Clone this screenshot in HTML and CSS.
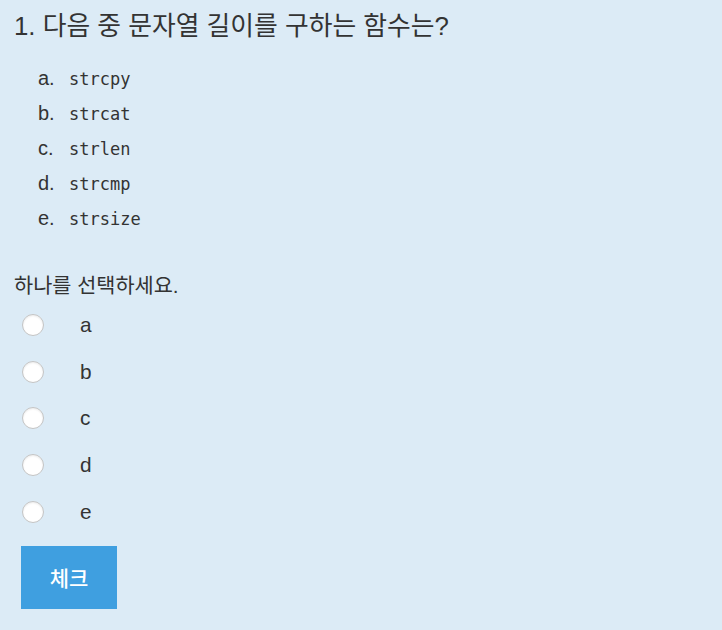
FILE: index.html
```html
<!DOCTYPE html>
<html lang="ko">

<head>
    <meta charset="UTF-8">
    <meta name="viewport" content="width=device-width, initial-scale=1.0">
    <title>문제 1</title>
    <link rel="stylesheet" href="styles.css">
</head>

<body>

    <div id="quiz">
        <h2 id="question">1. 다음 중 문자열 길이를 구하는 함수는?</h2>

        <ul class="choices">
            <li><span class="mark">a.</span><code>strcpy</code></li>
            <li><span class="mark">b.</span><code>strcat</code></li>
            <li><span class="mark">c.</span><code>strlen</code></li>
            <li><span class="mark">d.</span><code>strcmp</code></li>
            <li><span class="mark">e.</span><code>strsize</code></li>
        </ul>

        <p class="prompt">하나를 선택하세요.</p>

        <div class="answers">
            <label class="answer"><input type="radio" name="ans" value="a"><span>a</span></label>
            <label class="answer"><input type="radio" name="ans" value="b"><span>b</span></label>
            <label class="answer"><input type="radio" name="ans" value="c"><span>c</span></label>
            <label class="answer"><input type="radio" name="ans" value="d"><span>d</span></label>
            <label class="answer"><input type="radio" name="ans" value="e"><span>e</span></label>
        </div>

        <button type="button" id="btn-check">체크</button>
    </div>

</body>

</html>
```

FILE: styles.css
```css
body,
html {
    margin: 0;
    padding: 0;
    height: 100%;
    background: #dcebf6;
}

#quiz {
    padding: 10px 14px 20px;
    color: #333;
    font-family: "Liberation Sans", "Noto Sans CJK KR", sans-serif;
}

#question {
    margin: 0;
    font-size: 25.8px;
    font-weight: normal;
    line-height: 32px;
}

.choices {
    list-style: none;
    margin: 18.5px 0 0;
    padding: 0 0 0 24px;
}

.choices li {
    display: flex;
    align-items: baseline;
    height: 35px;
    line-height: 35px;
    font-size: 20px;
}

.mark {
    width: 31px;
}

.choices code {
    font-family: "DejaVu Sans Mono", monospace;
    font-size: 17px;
}

.prompt {
    margin: 36.5px 0 0;
    font-size: 20.8px;
    line-height: 28px;
}

.answers {
    display: flex;
    flex-direction: column;
    margin-top: 1.6px;
}

.answer {
    display: flex;
    align-items: center;
    height: 46.75px;
    font-size: 20.8px;
    padding-left: 8px;
}

.answer input {
    appearance: none;
    -webkit-appearance: none;
    width: 22px;
    height: 22px;
    margin: 0 36px 0 0;
    border-radius: 50%;
    background: #fff;
    border: 1px solid #c4c4c4;
    box-shadow: inset 0 1px 2px rgba(0, 0, 0, 0.08);
}

#btn-check {
    display: block;
    margin: 10.6px 0 0 7px;
    width: 96px;
    height: 63px;
    border: none;
    background: #3f9fe0;
    color: white;
    font-size: 21px;
    font-weight: 500;
    font-family: "Liberation Sans", "Noto Sans CJK KR", sans-serif;
    cursor: pointer;
}
```
